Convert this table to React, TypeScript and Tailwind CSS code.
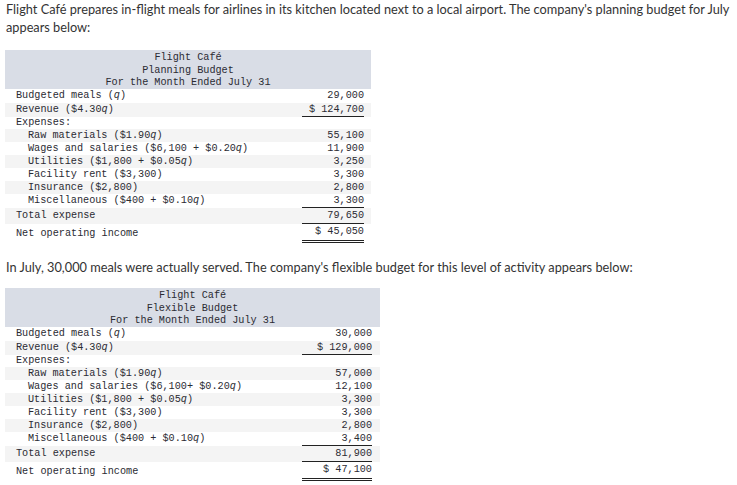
import React from 'react';

type Row = {
  label: React.ReactNode;
  value: string;
  indent?: boolean;
  line?: 'single' | 'double';
  h: string;
};

const q = <i>q</i>;

const planning: Row[] = [
  { label: <>Budgeted meals ({q})</>, value: '29,000', h: 'h-[14px]' },
  { label: <>Revenue ($4.30{q})</>, value: '$ 124,700', line: 'single', h: 'h-[14px]' },
  { label: 'Expenses:', value: '', h: 'h-[12px]' },
  { label: <>Raw materials ($1.90{q})</>, value: '55,100', indent: true, h: 'h-[13px]' },
  { label: <>Wages and salaries ($6,100 + $0.20{q})</>, value: '11,900', indent: true, h: 'h-[13px]' },
  { label: <>Utilities ($1,800 + $0.05{q})</>, value: '3,250', indent: true, h: 'h-[13px]' },
  { label: 'Facility rent ($3,300)', value: '3,300', indent: true, h: 'h-[13px]' },
  { label: 'Insurance ($2,800)', value: '2,800', indent: true, h: 'h-[13px]' },
  { label: <>Miscellaneous ($400 + $0.10{q})</>, value: '3,300', indent: true, line: 'single', h: 'h-[14px]' },
  { label: 'Total expense', value: '79,650', line: 'single', h: 'h-[16px]' },
  { label: 'Net operating income', value: '$ 45,050', line: 'double', h: 'h-[19px]' },
];

const flexible: Row[] = [
  { label: <>Budgeted meals ({q})</>, value: '30,000', h: 'h-[14px]' },
  { label: <>Revenue ($4.30{q})</>, value: '$ 129,000', line: 'single', h: 'h-[14px]' },
  { label: 'Expenses:', value: '', h: 'h-[12px]' },
  { label: <>Raw materials ($1.90{q})</>, value: '57,000', indent: true, h: 'h-[13px]' },
  { label: <>Wages and salaries ($6,100+ $0.20{q})</>, value: '12,100', indent: true, h: 'h-[13px]' },
  { label: <>Utilities ($1,800 + $0.05{q})</>, value: '3,300', indent: true, h: 'h-[13px]' },
  { label: 'Facility rent ($3,300)', value: '3,300', indent: true, h: 'h-[13px]' },
  { label: 'Insurance ($2,800)', value: '2,800', indent: true, h: 'h-[13px]' },
  { label: <>Miscellaneous ($400 + $0.10{q})</>, value: '3,400', indent: true, line: 'single', h: 'h-[14px]' },
  { label: 'Total expense', value: '81,900', line: 'single', h: 'h-[16px]' },
  { label: 'Net operating income', value: '$ 47,100', line: 'double', h: 'h-[19px]' },
];

function BudgetTable({ title, rows, wide }: { title: string; rows: Row[]; wide?: boolean }) {
  return (
    <div
      className={`ml-[5px] ${wide ? 'w-[375px]' : 'w-[366px]'} text-[10.2px] text-[#2b2b33] font-['Liberation_Mono',monospace] whitespace-pre`}
    >
      <div className="bg-[#d9dde6] h-[39px] pt-[2px] leading-[12.5px] text-center">
        <div>Flight Café</div>
        <div>{title}</div>
        <div>For the Month Ended July 31</div>
      </div>
      {rows.map((r, i) => (
        <div key={i} className={`flex ${r.h} ${i % 2 === 1 ? 'bg-[#f4f4f4]' : 'bg-white'}`}>
          <div className={`w-[297px] flex items-center ${r.indent ? 'pl-[23px]' : 'pl-[11px]'}`}>
            {r.label}
          </div>
          <div
            className={`${wide ? 'w-[70px]' : 'w-[62px]'} flex items-center justify-end ${
              r.line === 'single'
                ? 'border-b border-[#222]'
                : r.line === 'double'
                  ? 'border-b-[3px] border-double border-[#222]'
                  : ''
            }`}
          >
            {r.value}
          </div>
        </div>
      ))}
    </div>
  );
}

export default function App() {
  return (
    <div className="w-[737px] h-[485px] bg-white overflow-hidden font-['Lato',sans-serif] text-[#333]">
      <p className="pl-[6px] w-[732px] text-[12.75px] leading-[18px]">
        Flight Café prepares in-flight meals for airlines in its kitchen located next to a local airport. The
        company's planning budget for July appears below:
      </p>
      <div className="h-[14px]" />
      <BudgetTable title="Planning Budget" rows={planning} />
      <p className="pl-[6px] mt-[15px] text-[12.75px] leading-[18px]">
        In July, 30,000 meals were actually served. The company's flexible budget for this level of activity
        appears below:
      </p>
      <div className="h-[12px]" />
      <BudgetTable title="Flexible Budget" rows={flexible} wide />
    </div>
  );
}
